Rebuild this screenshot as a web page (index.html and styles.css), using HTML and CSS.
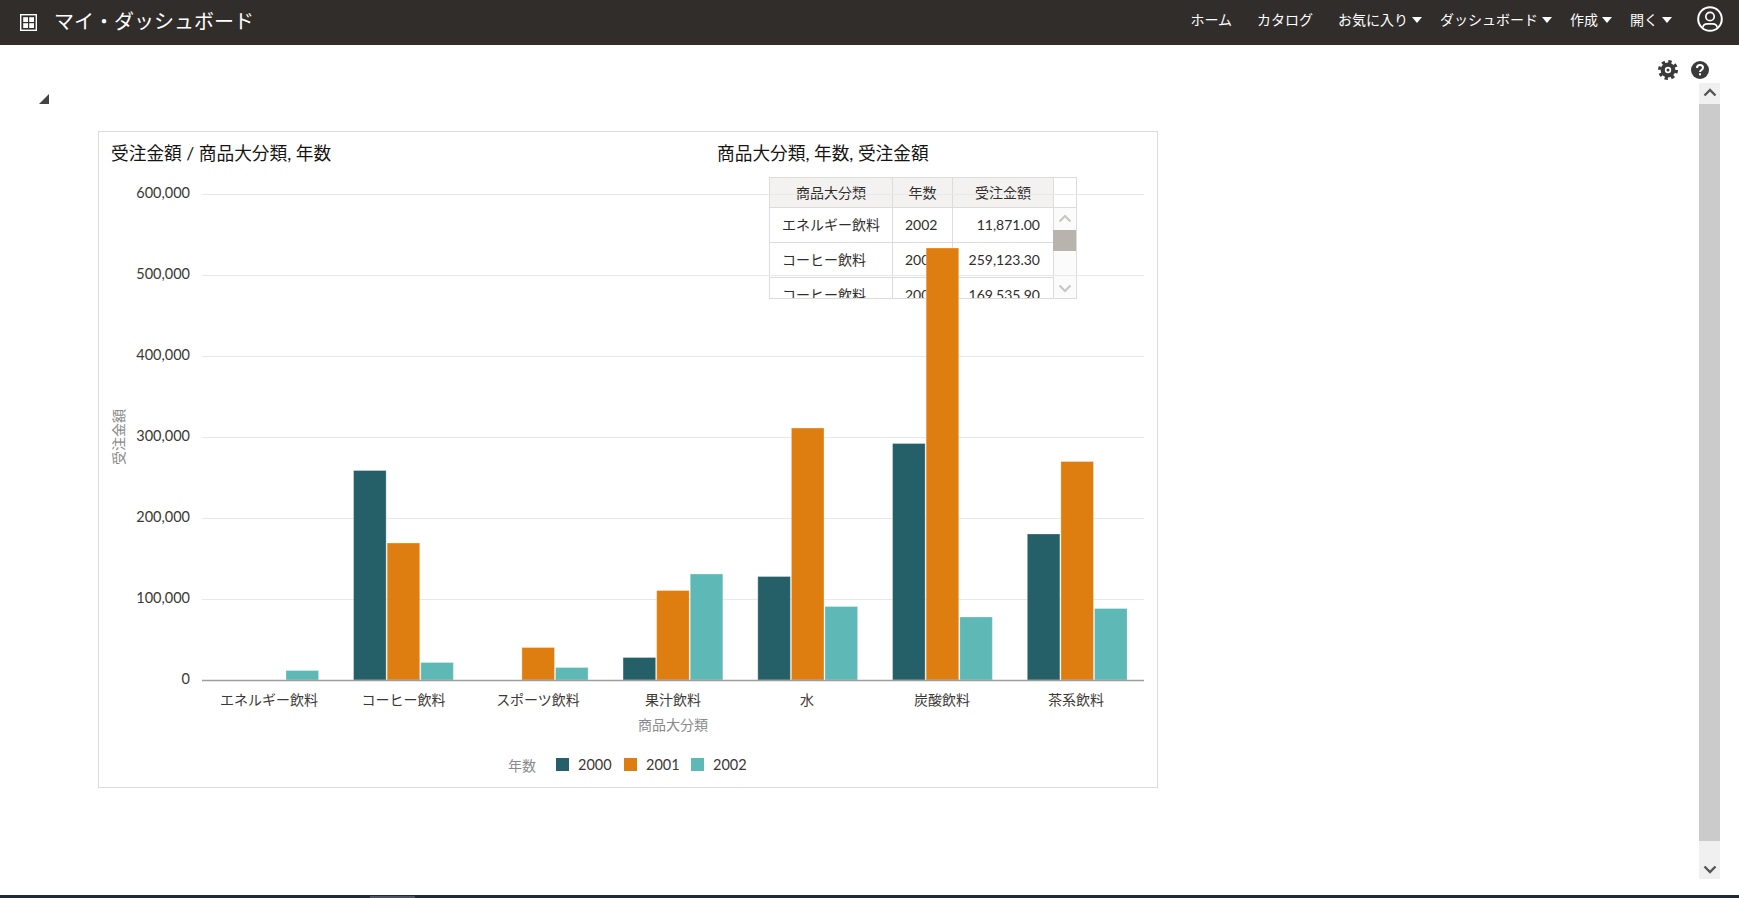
FILE: index.html
```html
<!DOCTYPE html>
<html lang="ja">
<head>
<meta charset="utf-8">
<title>マイ・ダッシュボード</title>
<link rel="stylesheet" href="styles.css">
</head>
<body>
<header class="topbar">
  <svg class="apps-icon" viewBox="0 0 17 17" width="17" height="17" aria-hidden="true">
    <rect x="0.7" y="0.7" width="15.6" height="15.6" fill="none" stroke="#fff" stroke-width="1.4"/>
    <rect x="3.2" y="3.2" width="4.8" height="4.8" fill="#fff"/>
    <rect x="9.2" y="3.2" width="4.8" height="4.8" fill="#fff"/>
    <rect x="3.2" y="9.2" width="4.8" height="4.8" fill="#fff"/>
    <rect x="9.2" y="9.2" width="4.8" height="4.8" fill="#fff"/>
  </svg>
  <h1 class="app-title">マイ・ダッシュボード</h1>
  <nav class="nav">
    <a class="nav-link plain">ホーム</a>
    <a class="nav-link plain">カタログ</a>
    <a class="nav-link">お気に入り<i class="caret"></i></a>
    <a class="nav-link">ダッシュボード<i class="caret"></i></a>
    <a class="nav-link">作成<i class="caret"></i></a>
    <a class="nav-link">開く<i class="caret"></i></a>
    <svg class="user-icon" viewBox="0 0 26 26" width="26" height="26" aria-hidden="true">
      <circle cx="13" cy="13" r="11.8" fill="none" stroke="#fff" stroke-width="2"/>
      <circle cx="13" cy="10.5" r="4.2" fill="none" stroke="#fff" stroke-width="1.7"/>
      <path d="M6 21.5c0-2.6 2-3.7 4.5-3.7h5c2.500 0 4.500 1.100 4.500 3.700" fill="none" stroke="#fff" stroke-width="1.7"/>
    </svg>
  </nav>
</header>

<div class="workspace">
  <div class="toolbar">
    <svg class="gear" viewBox="0 0 20 20" width="20" height="20" aria-hidden="true">
      <circle cx="10" cy="10" r="8.400" fill="none" stroke="#3a3a3a" stroke-width="3.200" stroke-dasharray="3.300 3.300"/>
      <circle cx="10" cy="10" r="7.400" fill="#3a3a3a"/>
      <circle cx="10" cy="10" r="3.200" fill="#fff"/>
      <circle cx="10" cy="10" r="1.500" fill="#3a3a3a"/>
    </svg>
    <svg class="help" viewBox="0 0 18 18" width="18" height="18" aria-hidden="true">
      <circle cx="9" cy="9" r="9" fill="#3a3a3a"/>
      <path d="M6 7c0-1.800 1.300-2.900 3-2.900s3 1 3 2.600c0 2.200-3 2.300-3 4.300" fill="none" stroke="#fff" stroke-width="2"/>
      <rect x="8" y="12.300" width="2" height="2" fill="#fff"/>
    </svg>
  </div>

  <div class="stage">
    <main class="content">
      <div class="collapse-mark"></div>
      <section class="card">
        <div class="titles">
          <h2 class="view-title">受注金額 / 商品大分類, 年数</h2>
          <h2 class="view-title">商品大分類, 年数, 受注金額</h2>
        </div>

        <div class="data-table">
          <table class="dt-head">
            <tr><th class="c1"><span class="jp">商品大分類</span></th><th class="c2"><span class="jp">年数</span></th><th class="c3"><span class="jp">受注金額</span></th><th class="c4"></th></tr>
          </table>
          <div class="dt-body">
            <table class="dt-rows">
              <tr><td class="c1"><span class="jp">エネルギー飲料</span></td><td class="c2">2002</td><td class="c3">11,871.00</td></tr>
              <tr><td class="c1"><span class="jp">コーヒー飲料</span></td><td class="c2">2000</td><td class="c3">259,123.30</td></tr>
              <tr><td class="c1"><span class="jp">コーヒー飲料</span></td><td class="c2">2001</td><td class="c3">169,535.90</td></tr>
            </table>
            <div class="mini-scroll">
              <svg class="mini-arrow" viewBox="0 0 14 9" width="14" height="9" aria-hidden="true"><path d="M1.500 7.500 7 2l5.500 5.500" fill="none" stroke="#c9c6c3" stroke-width="2.200"/></svg>
              <div class="mini-thumb"></div>
              <svg class="mini-arrow down" viewBox="0 0 14 9" width="14" height="9" aria-hidden="true"><path d="M1.500 1.500 7 7l5.500-5.500" fill="none" stroke="#c9c6c3" stroke-width="2.200"/></svg>
            </div>
          </div>
        </div>

        <svg class="chart" viewBox="99 172 1058 615" width="1058" height="615" role="img">
          <g class="grid">
            <line x1="202" x2="1144" y1="194.500" y2="194.500"/>
            <line x1="202" x2="1144" y1="275.500" y2="275.500"/>
            <line x1="202" x2="1144" y1="356.500" y2="356.500"/>
            <line x1="202" x2="1144" y1="437.500" y2="437.500"/>
            <line x1="202" x2="1144" y1="518.500" y2="518.500"/>
            <line x1="202" x2="1144" y1="599.500" y2="599.500"/>
          </g>
          <g class="tick y-tick">
            <text x="190" y="198">600,000</text>
            <text x="190" y="279">500,000</text>
            <text x="190" y="360">400,000</text>
            <text x="190" y="441">300,000</text>
            <text x="190" y="522">200,000</text>
            <text x="190" y="603">100,000</text>
            <text x="190" y="684">0</text>
          </g>
          <g class="bars s2000">
            <rect x="353.550" y="470.500" width="32.600" height="209.500"/>
            <rect x="623.050" y="657.500" width="32.600" height="22.500"/>
            <rect x="757.800" y="576.500" width="32.600" height="103.500"/>
            <rect x="892.550" y="443.500" width="32.600" height="236.500"/>
            <rect x="1027.300" y="534" width="32.600" height="146"/>
          </g>
          <g class="bars s2001">
            <rect x="387.150" y="543" width="32.600" height="137"/>
            <rect x="521.900" y="647.500" width="32.600" height="32.500"/>
            <rect x="656.650" y="590.500" width="32.600" height="89.500"/>
            <rect x="791.400" y="428" width="32.600" height="252"/>
            <rect x="926.150" y="248" width="32.600" height="432"/>
            <rect x="1060.900" y="461.500" width="32.600" height="218.500"/>
          </g>
          <g class="bars s2002">
            <rect x="286" y="670.500" width="32.600" height="9.500"/>
            <rect x="420.750" y="662.500" width="32.600" height="17.500"/>
            <rect x="555.500" y="667.500" width="32.600" height="12.500"/>
            <rect x="690.250" y="574" width="32.600" height="106"/>
            <rect x="825" y="606.500" width="32.600" height="73.500"/>
            <rect x="959.750" y="617" width="32.600" height="63"/>
            <rect x="1094.500" y="608.500" width="32.600" height="71.500"/>
          </g>
          <line class="axis" x1="202" x2="1144" y1="680.500" y2="680.500"/>
          <g class="tick x-tick">
            <text x="269" y="705">エネルギー飲料</text>
            <text x="403.500" y="705">コーヒー飲料</text>
            <text x="538" y="705">スポーツ飲料</text>
            <text x="673" y="705">果汁飲料</text>
            <text x="807" y="705">水</text>
            <text x="942" y="705">炭酸飲料</text>
            <text x="1076" y="705">茶系飲料</text>
          </g>
          <text class="axis-title mid" x="673" y="730">商品大分類</text>
          <text class="axis-title mid" transform="translate(124 437) rotate(-90)">受注金額</text>
          <text class="axis-title" x="508" y="771">年数</text>
          <g class="legend">
            <rect class="swatch-a" x="556" y="758" width="13" height="13"/>
            <text x="578" y="770">2000</text>
            <rect class="swatch-b" x="624" y="758" width="13" height="13"/>
            <text x="646" y="770">2001</text>
            <rect class="swatch-c" x="691" y="758" width="13" height="13"/>
            <text x="713" y="770">2002</text>
          </g>
        </svg>
      </section>
    </main>

    <div class="page-scroll">
      <div class="ps-btn top">
        <svg viewBox="0 0 14 9" width="14" height="9" aria-hidden="true"><path d="M1.500 7.500 7 2l5.500 5.500" fill="none" stroke="#555" stroke-width="2.400"/></svg>
      </div>
      <div class="ps-thumb"></div>
      <div class="ps-btn bottom">
        <svg viewBox="0 0 14 9" width="14" height="9" aria-hidden="true"><path d="M1.500 1.500 7 7l5.500-5.500" fill="none" stroke="#555" stroke-width="2.400"/></svg>
      </div>
    </div>
  </div>
</div>

<footer class="taskbar"><div class="task-tab"></div></footer>
</body>
</html>
```

FILE: styles.css
```css
* { box-sizing: border-box; }

html, body { height: 100%; margin: 0; }

body {
  display: flex;
  flex-direction: column;
  height: 898px;
  overflow: hidden;
  background: #fff;
  color: #312d2a;
  font-family: Lato, "Noto Sans CJK JP", sans-serif;
  font-size: 14px;
}

/* top bar */
.topbar {
  flex: 0 0 45px;
  display: flex;
  align-items: center;
  padding: 0 16px 6px 20px;
  background: #312d2a;
  color: #fff;
}

.apps-icon { flex: none; margin-top: 6px; }

.app-title {
  margin: 2px 0 0 17px;
  font-size: 20px;
  font-weight: 400;
  line-height: 30px;
}

.nav {
  margin-left: auto;
  display: flex;
  align-items: center;
  gap: 18px;
}

.nav-link {
  display: flex;
  align-items: center;
  gap: 4px;
  line-height: 20px;
  white-space: nowrap;
}

.nav-link.plain { margin-right: 7px; }

.caret {
  width: 0;
  height: 0;
  margin-top: 1px;
  border-left: 5px solid transparent;
  border-right: 5px solid transparent;
  border-top: 6px solid #fff;
}

.user-icon { flex: none; margin: 0 0 2px 7px; }

/* workspace */
.workspace {
  flex: 1;
  display: flex;
  flex-direction: column;
  min-height: 0;
}

.toolbar {
  flex: 0 0 38px;
  display: flex;
  justify-content: flex-end;
  align-items: center;
  gap: 13px;
  padding: 12px 30px 0 0;
}

.stage {
  flex: 1;
  display: flex;
  min-height: 0;
  padding: 0 19px 16px 0;
}

.content { flex: 1; min-width: 0; }

.collapse-mark {
  width: 0;
  height: 0;
  margin: 11px 0 27px 39px;
  border-left: 10px solid transparent;
  border-bottom: 10px solid #444;
}

/* card */
.card {
  position: relative;
  width: 1060px;
  height: 657px;
  margin-left: 98px;
  border: 1px solid #dcdcdc;
  background: #fff;
}

.titles {
  display: grid;
  grid-template-columns: 606px 1fr;
  height: 40px;
  padding: 10px 0 6px 12px;
}

.view-title {
  margin: 0;
  color: #161513;
  font-size: 17.700px;
  font-weight: 400;
  line-height: 24px;
  white-space: nowrap;
}

/* data table */
.data-table {
  position: absolute;
  left: 670px;
  top: 45px;
  width: 308px;
  height: 122px;
  overflow: hidden;
  border: 1px solid #dcdcdc;
  background: #fff;
}

.data-table table {
  border-collapse: separate;
  border-spacing: 0;
  table-layout: fixed;
}

.jp { position: relative; top: -1px; }

.dt-head { width: 306px; }

.dt-head th {
  height: 30px;
  padding: 0;
  border-right: 1px solid #dcdcdc;
  border-bottom: 1px solid #dcdcdc;
  background: #f3f2f1;
  font-weight: 400;
  text-align: center;
}

.dt-head .c4 { width: 22px; border-right: 0; background: #fff; }

.c1 { width: 123px; }
.c2 { width: 60px; }
.c3 { width: 101px; }

.dt-body { display: flex; }

.dt-rows { flex: none; width: 284px; }

.dt-rows td {
  height: 35px;
  padding: 0 13px 1px 12px;
  border-right: 1px solid #dcdcdc;
  border-bottom: 1px solid #dcdcdc;
  white-space: nowrap;
}

.dt-rows .c3 { text-align: right; }

.mini-scroll {
  flex: 1;
  display: flex;
  flex-direction: column;
  align-items: center;
  height: 90px;
  padding-top: 6px;
  background: #fbfbfb;
}

.mini-thumb {
  align-self: stretch;
  height: 21px;
  margin: 7px 0 0 -1px;
  background: #b9b3ae;
}

.mini-arrow { flex: none; }
.mini-arrow.down { margin-top: 33px; }

/* chart */
.chart {
  position: relative;
  display: block;
}

.grid line { stroke: #e6e8ea; stroke-width: 1; }

.axis { stroke: #9e9e9e; stroke-width: 1.500; }

.tick text, .legend text {
  fill: #3c3835;
  font-size: 14.500px;
}

.y-tick text { text-anchor: end; }
.x-tick text { text-anchor: middle; font-size: 14px; }

.axis-title { fill: #8a8a8a; font-size: 14px; }
.axis-title.mid { text-anchor: middle; }

.bars rect { stroke: #fff; stroke-opacity: 0.3; stroke-width: 1; }

.s2000 rect, .swatch-a { fill: #255f68; }
.s2001 rect, .swatch-b { fill: #df7e10; }
.s2002 rect, .swatch-c { fill: #5eb8b5; }

/* page scrollbar */
.page-scroll {
  flex: 0 0 21px;
  display: flex;
  flex-direction: column;
}

.ps-btn {
  display: flex;
  justify-content: center;
  background: #f0f0f0;
}

.ps-btn.top { flex: 0 0 21px; padding-top: 5px; }
.ps-btn.bottom { flex: 0 0 38px; padding-top: 24px; }

.ps-thumb { flex: 1; background: #cbcbcb; }

/* bottom strip */
.taskbar {
  flex: 0 0 3px;
  padding: 1px 0 0 370px;
  background: #1c2b36;
}

.task-tab {
  width: 45px;
  height: 2px;
  background: #4a545e;
}
```
